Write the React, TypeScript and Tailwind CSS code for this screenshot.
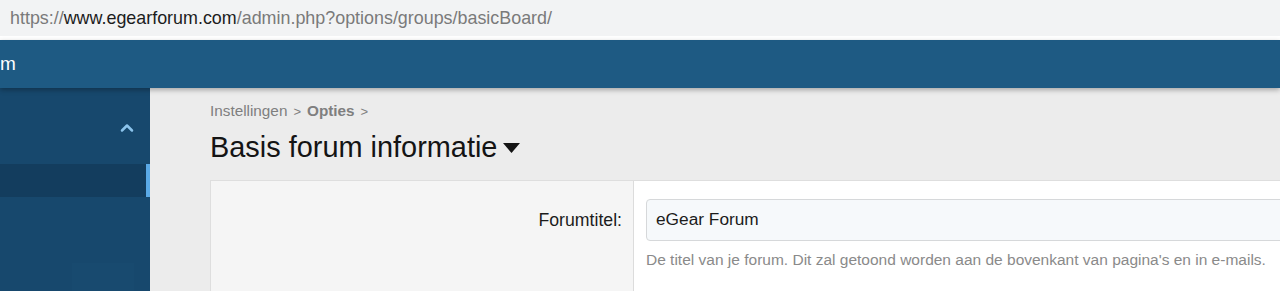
import { ChevronUp } from "lucide-react";

export default function App() {
  return (
    <div className="h-[291px] w-[1280px] overflow-hidden bg-[#ececec] font-['Liberation_Sans',Arial,sans-serif]">
      {/* Address bar */}
      <div className="flex h-[36px] items-center bg-[#f2f3f4] pl-[10px] text-[17.9px] text-[#7a7a7a]">
        <span>https://</span>
        <span className="text-[#1c1c1c]">www.egearforum.com</span>
        <span>/admin.php?options/groups/basicBoard/</span>
      </div>
      <div className="h-[4px] bg-white" />

      {/* Header */}
      <header className="relative z-10 flex h-[48px] items-center bg-[#1e5a83] text-[19px] text-white shadow-[0_2px_5px_rgba(0,0,0,0.3)]">
        <span>m</span>
      </header>

      <div className="flex h-[203px]">
        {/* Sidebar */}
        <aside className="flex w-[150px] shrink-0 flex-col bg-[#17486d]">
          <div className="flex h-[76px] items-center justify-end pr-[13px] pt-[3px]">
            <ChevronUp className="h-[20px] w-[20px] text-[#8cc4ec]" strokeWidth={3} />
          </div>
          <div className="flex h-[33px] justify-end bg-[#133d5e]">
            <div className="w-[4px] bg-[#5aa9e6]" />
          </div>
          <div className="relative flex-1">
            <div className="absolute left-[72px] top-[66px] h-[40px] w-[62px] bg-[#184a6f]" />
          </div>
        </aside>

        {/* Main */}
        <main className="flex-1 pl-[60px] pt-[12px]">
          <div className="flex items-center gap-[6px] text-[15.3px] text-[#7f7f7f]">
            <span>Instellingen</span>
            <span className="text-[13px]">&gt;</span>
            <span className="font-bold">Opties</span>
            <span className="text-[13px]">&gt;</span>
          </div>
          <div className="mt-[6px] flex items-center gap-[6px]">
            <h1 className="text-[28.9px] leading-[36px] text-[#141414]">Basis forum informatie</h1>
            <svg width="17" height="10" viewBox="0 0 17 10" className="mt-[2px]">
              <path d="M0 0 L17 0 L8.5 10 Z" fill="#141414" />
            </svg>
          </div>

          <div className="mt-[15px] flex h-[200px] border-l border-t border-[#dedede] bg-white">
            <div className="flex w-[423px] shrink-0 justify-end border-r border-[#dcdcdc] bg-[#f5f5f5] pr-[11px] pt-[26px]">
              <span className="text-[17.7px] text-[#1c1c1c]">Forumtitel:</span>
            </div>
            <div className="flex-1 pl-[12px] pt-[18px]">
              <div className="-mr-[10px] flex h-[42px] items-center rounded-[4px] border border-[#d6d8da] bg-[#f6f9fb] pl-[9px] text-[17.3px] text-[#1c1c1c]">
                eGear Forum
              </div>
              <p className="mt-[7px] text-[15.5px] text-[#8a8a8a]">
                De titel van je forum. Dit zal getoond worden aan de bovenkant van pagina's en in e-mails.
              </p>
            </div>
          </div>
        </main>
      </div>
    </div>
  );
}
